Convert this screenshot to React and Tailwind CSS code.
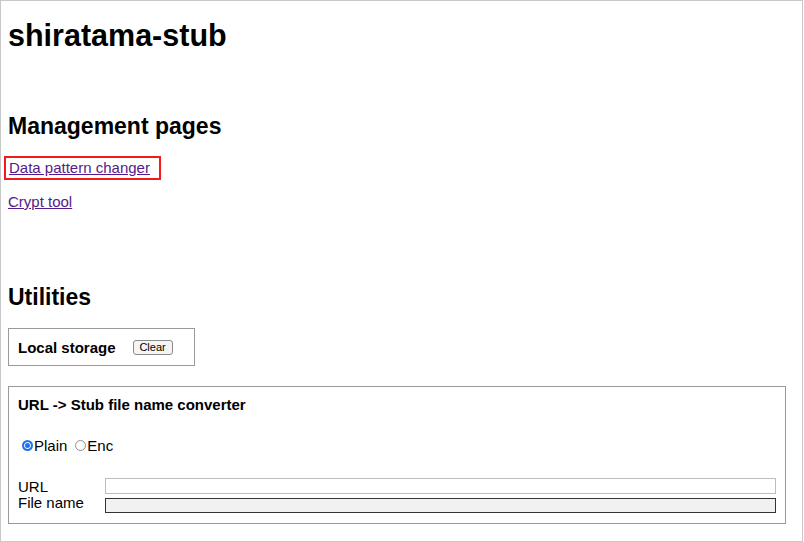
const App = () => {
  return (
    <div className="w-[803px] h-[542px] overflow-hidden border border-[#c8c8c8] bg-white pl-[7px] font-['Liberation_Sans',Arial,sans-serif] text-[15px] text-black">
      <h1 className="mt-[16px] text-[30.5px] leading-[36px] font-bold">shiratama-stub</h1>

      <h2 className="mt-[59px] text-[23px] leading-[28px] font-bold">Management pages</h2>
      <div className="mt-[16px] -ml-[4px] w-[157px] border-2 border-[#f21b1b] pl-[3px] py-[1px]">
        <a href="#" className="block leading-[18px] text-[#551a8b] underline">Data pattern changer</a>
      </div>
      <div className="mt-[11px]">
        <a href="#" className="leading-[18px] text-[#551a8b] underline">Crypt tool</a>
      </div>

      <h2 className="mt-[69px] text-[23px] leading-[28px] font-bold">Utilities</h2>

      <div className="mt-[17px] flex w-[187px] items-start border border-[#9a9a9a] pl-[9px] pt-[10px] pb-[8px]">
        <span className="leading-[18px] font-bold">Local storage</span>
        <button className="mt-[1px] ml-[17px] h-[15px] w-[40px] rounded-[3px] border border-[#8a8a8a] bg-[#f5f5f5] text-[11px] leading-none text-black">
          Clear
        </button>
      </div>

      <div className="mt-[20px] w-[778px] border border-[#9a9a9a] pl-[9px] pr-[8px] pt-[9px] pb-[10px]">
        <div className="leading-[18px] font-bold">URL -&gt; Stub file name converter</div>

        <div className="mt-[23px] flex items-center leading-[18px]">
          <label className="ml-[4px] flex items-center">
            <input
              type="radio"
              name="mode"
              defaultChecked
              className="m-0 mr-[1px] h-[11px] w-[11px] appearance-none rounded-full border-2 border-[#1f74f0] bg-[#1f74f0] shadow-[inset_0_0_0_1px_#fff]"
            />
            <span>Plain</span>
          </label>
          <label className="ml-[8px] flex items-center">
            <input
              type="radio"
              name="mode"
              className="m-0 mr-[1px] h-[11px] w-[11px] appearance-none rounded-full border border-[#8f8f8f] bg-white"
            />
            <span>Enc</span>
          </label>
        </div>

        <div className="mt-[23px] grid grid-cols-[87px_1fr]">
          <span className="h-[20px] leading-[18px]">URL</span>
          <div className="h-[20px]">
            <input type="text" className="block h-[16px] w-[671px] border border-[#bdbdbd] bg-white outline-none" />
          </div>
          <span className="-mt-[4px] leading-[18px]">File name</span>
          <div>
            <input type="text" readOnly className="block h-[15px] w-[671px] border border-[#333] bg-[#f1f1f1] outline-none" />
          </div>
        </div>
      </div>
    </div>
  );
};

export default App;
